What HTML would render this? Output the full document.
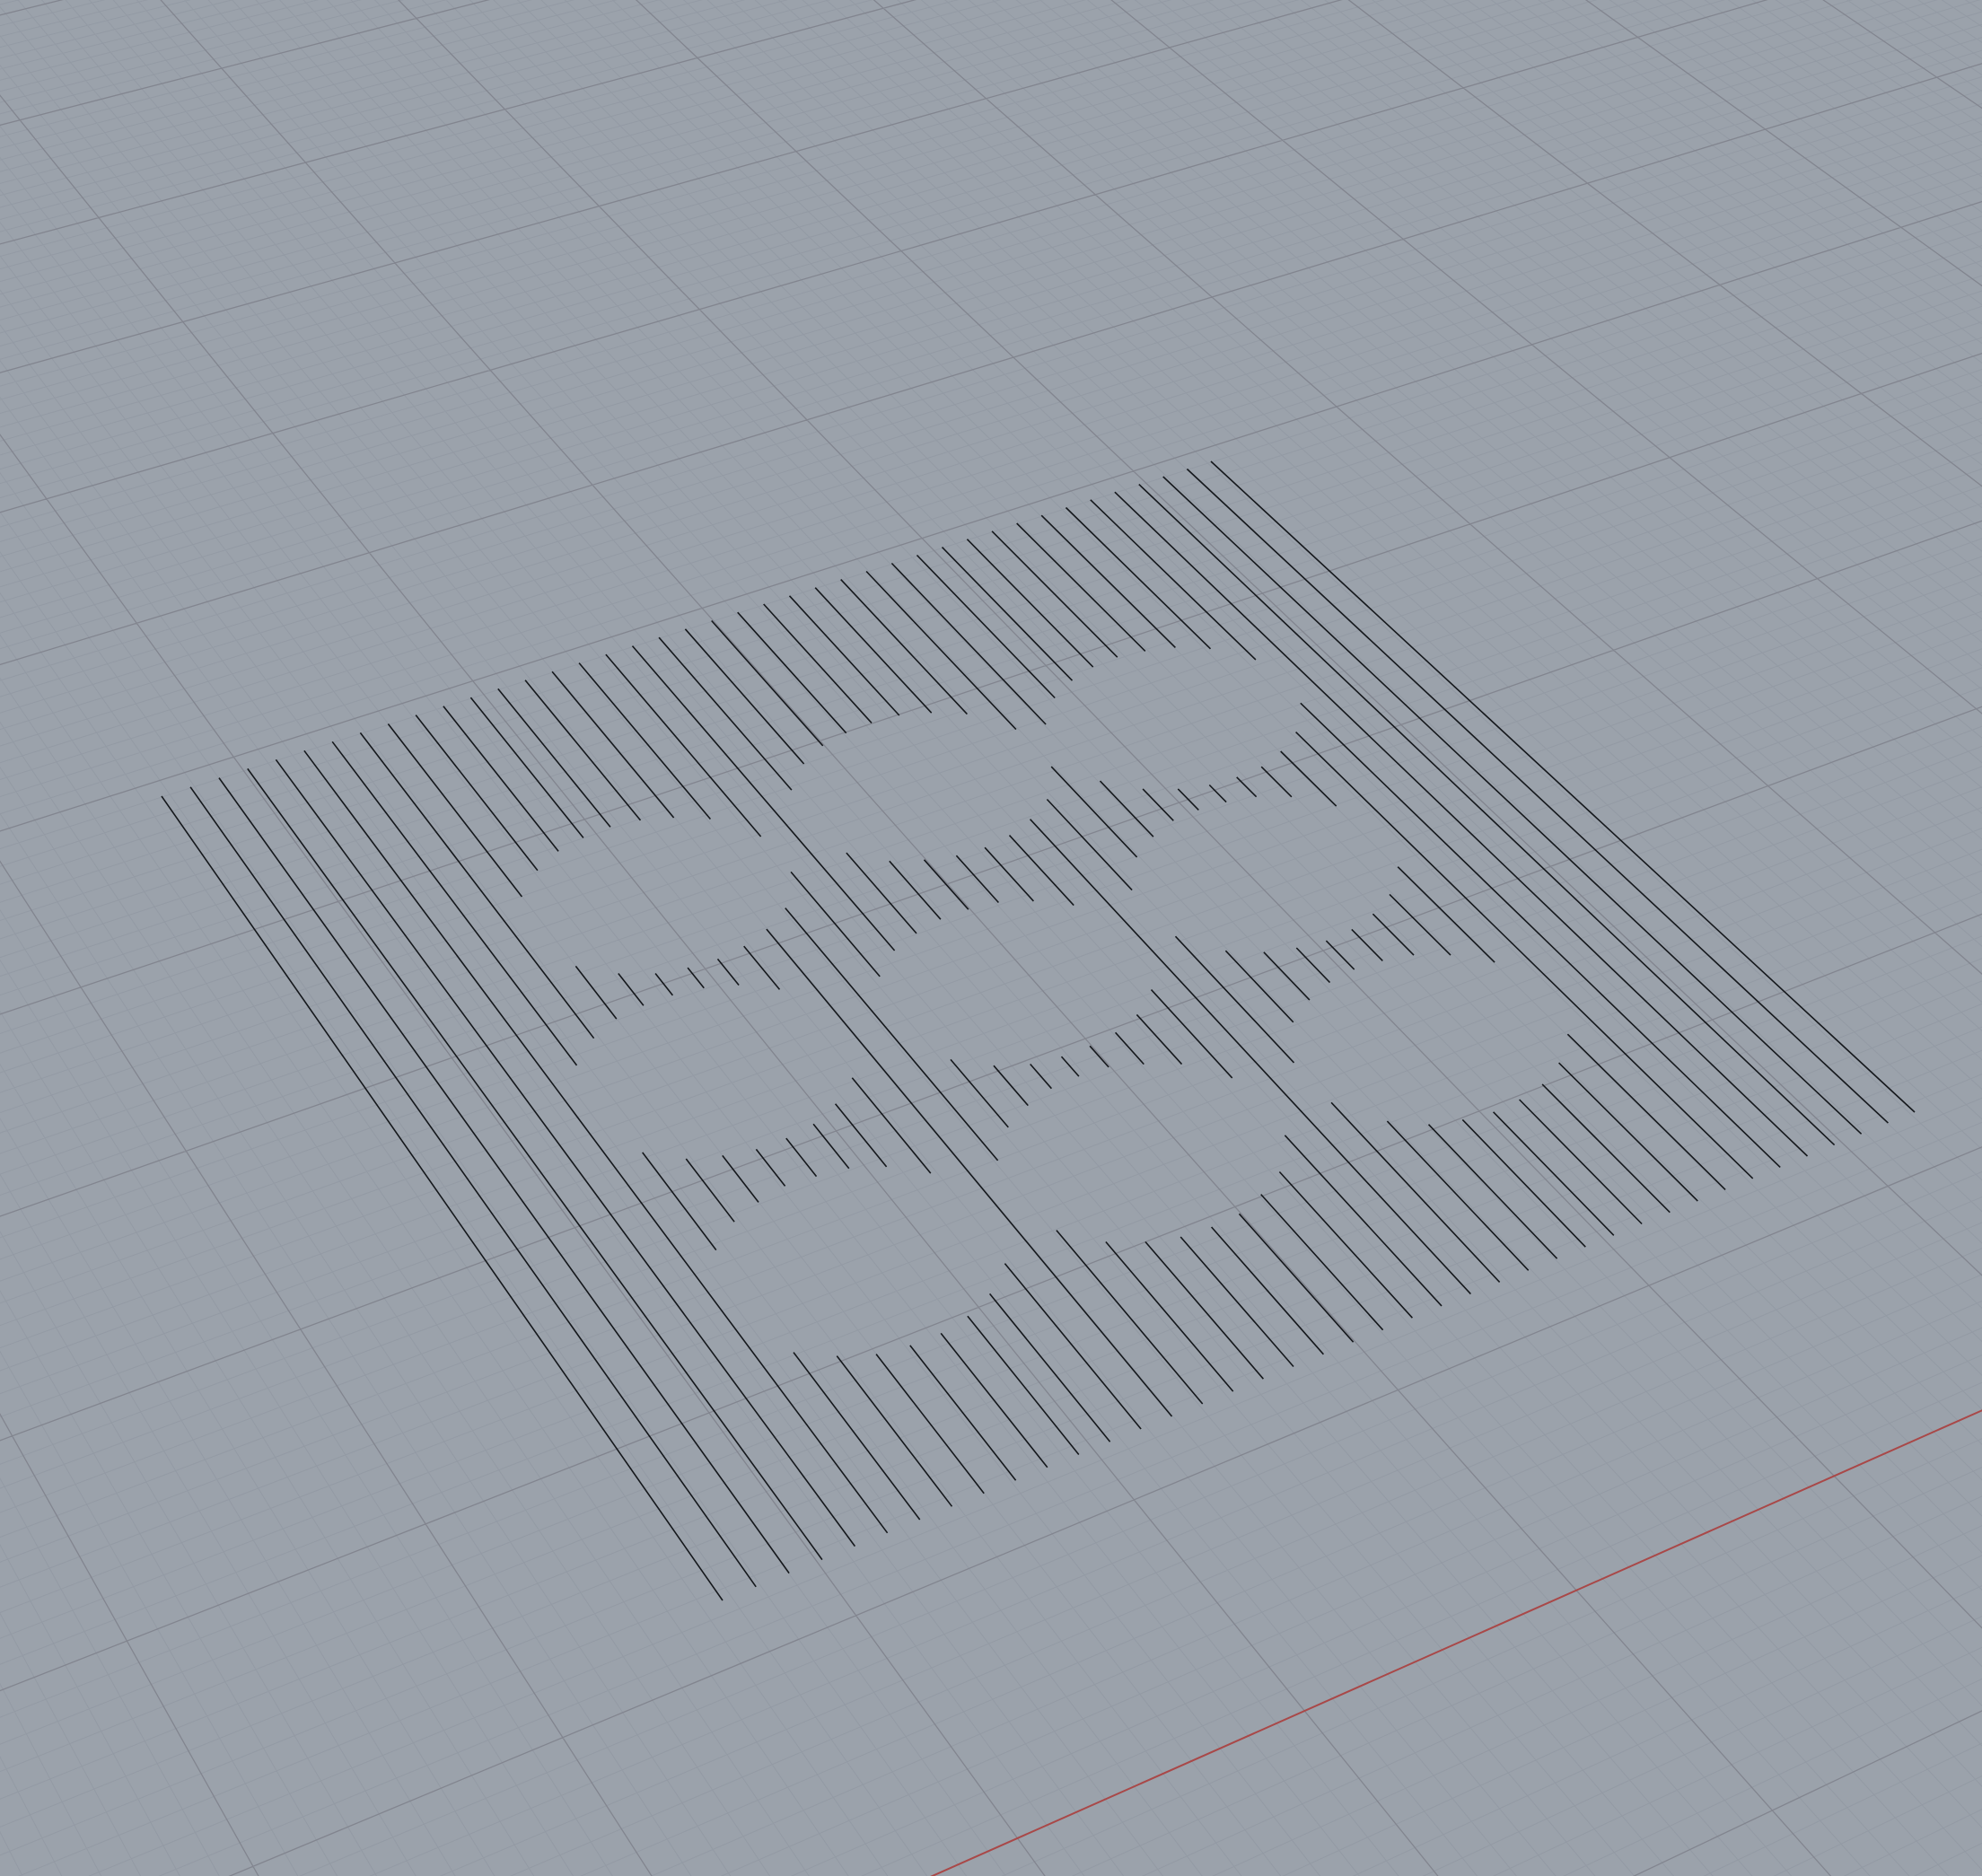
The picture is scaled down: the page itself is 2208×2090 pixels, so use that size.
<!DOCTYPE html>
<html><head><meta charset="utf-8"><style>
html,body{margin:0;padding:0;background:#9ba2ab;overflow:hidden;width:2208px;height:2090px}
svg{display:block}
</style></head><body>
<svg id="s" xmlns="http://www.w3.org/2000/svg" width="2208" height="2090" viewBox="0 0 2208 2090">
<rect width="2208" height="2090" fill="#9ba2ab"/>
<path id="mi" fill="none" stroke="#939aa4" stroke-width="1"/>
<path id="ma" fill="none" stroke="#82858f" stroke-width="1.3"/>
<path id="rd" fill="none" stroke="#a94848" stroke-width="2"/>
<path id="bk" fill="none" stroke="#15181c" stroke-width="1.6"/>
</svg>
<script>
(function(){
function solve(A,b){var n=b.length,i,j,k;for(i=0;i<n;i++){A[i]=A[i].slice();A[i].push(b[i]);}
for(i=0;i<n;i++){var p=i;for(j=i+1;j<n;j++)if(Math.abs(A[j][i])>Math.abs(A[p][i]))p=j;var t=A[i];A[i]=A[p];A[p]=t;
for(j=0;j<n;j++){if(j===i)continue;var f=A[j][i]/A[i][i];for(k=i;k<=n;k++)A[j][k]-=f*A[i][k];}}
var x=[];for(i=0;i<n;i++)x.push(A[i][n]/A[i][i]);return x;}
var src=[[0,0],[1,0],[1,1],[0,1]],dst=[[180,887],[1349,514],[2133,1239],[805,1783]];
var A=[],b=[];
for(var i=0;i<4;i++){var x=src[i][0],y=src[i][1],X=dst[i][0],Y=dst[i][1];
A.push([x,y,1,0,0,0,-X*x,-X*y]);b.push(X);A.push([0,0,0,x,y,1,-Y*x,-Y*y]);b.push(Y);}
var h=solve(A,b);
var a=h[0],bb=h[1],c=h[2],d=h[3],e=h[4],f=h[5],g=h[6],hh=h[7],ii=1;
function P(x,y){var w=g*x+hh*y+1;return [(a*x+bb*y+c)/w,(d*x+e*y+f)/w];}
var inv=[e*ii-f*hh,c*hh-bb*ii,bb*f-c*e,f*g-d*ii,a*ii-c*g,c*d-a*f,d*hh-e*g,bb*g-a*hh,a*e-bb*d];
function Inv(X,Y){var w=inv[6]*X+inv[7]*Y+inv[8];return [(inv[0]*X+inv[1]*Y+inv[2])/w,(inv[3]*X+inv[4]*Y+inv[5])/w];}
// grid scale from red axis intersections (consecutive major X)
var r1=Inv(1454,1907),r2=Inv(1756,1771),r3=Inv(2043,1644);
var du=(r3[0]-r1[0])/2; // figure units per major cell
var vRed=(r1[1]+r2[1]+r3[1])/3;
var u0=r1[0]; // a major line
function seg(x0,y0,dx,dy,t0,t1){var w0=g*x0+hh*y0+1,wd=g*dx+hh*dy,m=0.03;
if(Math.abs(wd)>1e-12){var tc=(m-w0)/wd;if(wd>0)t0=Math.max(t0,tc);else t1=Math.min(t1,tc);}else if(w0<m)return "";
if(t1<=t0)return "";var p=P(x0+t0*dx,y0+t0*dy),q=P(x0+t1*dx,y0+t1*dy);
if((p[0]<-50&&q[0]<-50)||(p[0]>2260&&q[0]>2260)||(p[1]<-50&&q[1]<-50)||(p[1]>2140&&q[1]>2140))return "";
return "M"+p[0].toFixed(1)+" "+p[1].toFixed(1)+"L"+q[0].toFixed(1)+" "+q[1].toFixed(1);}
var mi="",ma="",R=12;
for(var n=-400;n<=400;n++){
 var uu=u0+n*du/10, vv=vRed+n*du/10;
 var s1=seg(uu,0,0,1,-R,R),s2=seg(0,vv,1,0,-R,R);
 if(n%10===0){ma+=s1+s2;}else{mi+=s1+s2;}}
document.getElementById("mi").setAttribute("d",mi);
document.getElementById("ma").setAttribute("d",ma);
document.getElementById("rd").setAttribute("d",seg(0,vRed,1,0,-R,R));
// holes
var S=1.408,dc=[[519,707],[729,621],[928,567],[565,846],[803,776],[1000,690],[679,996],[903,910],[1130,820]];
var holes=dc.map(function(p){return Inv(p[0]*S,p[1]*S);});
function inHole(x,y){for(var j=0;j<holes.length;j++){var dx=(x-holes[j][0])/0.11,dy=(y-holes[j][1])/0.095;if(dx*dx+dy*dy<1)return true;}return false;}
var bk="";
for(var i=0;i<=40;i++){var x=i/40,st=null,step=0.002;
for(var y=0;y<=1.0001;y+=step){var inside=inHole(x,y);
if(!inside&&st===null)st=y;
if((inside||y+step>1.0001)&&st!==null){var ye=inside?y:1;if(ye-st>0.004){var p=P(x,st),q=P(x,ye);bk+="M"+p[0].toFixed(1)+" "+p[1].toFixed(1)+"L"+q[0].toFixed(1)+" "+q[1].toFixed(1);}st=null;}}}
document.getElementById("bk").setAttribute("d",bk);
})();
</script>
</body></html>
